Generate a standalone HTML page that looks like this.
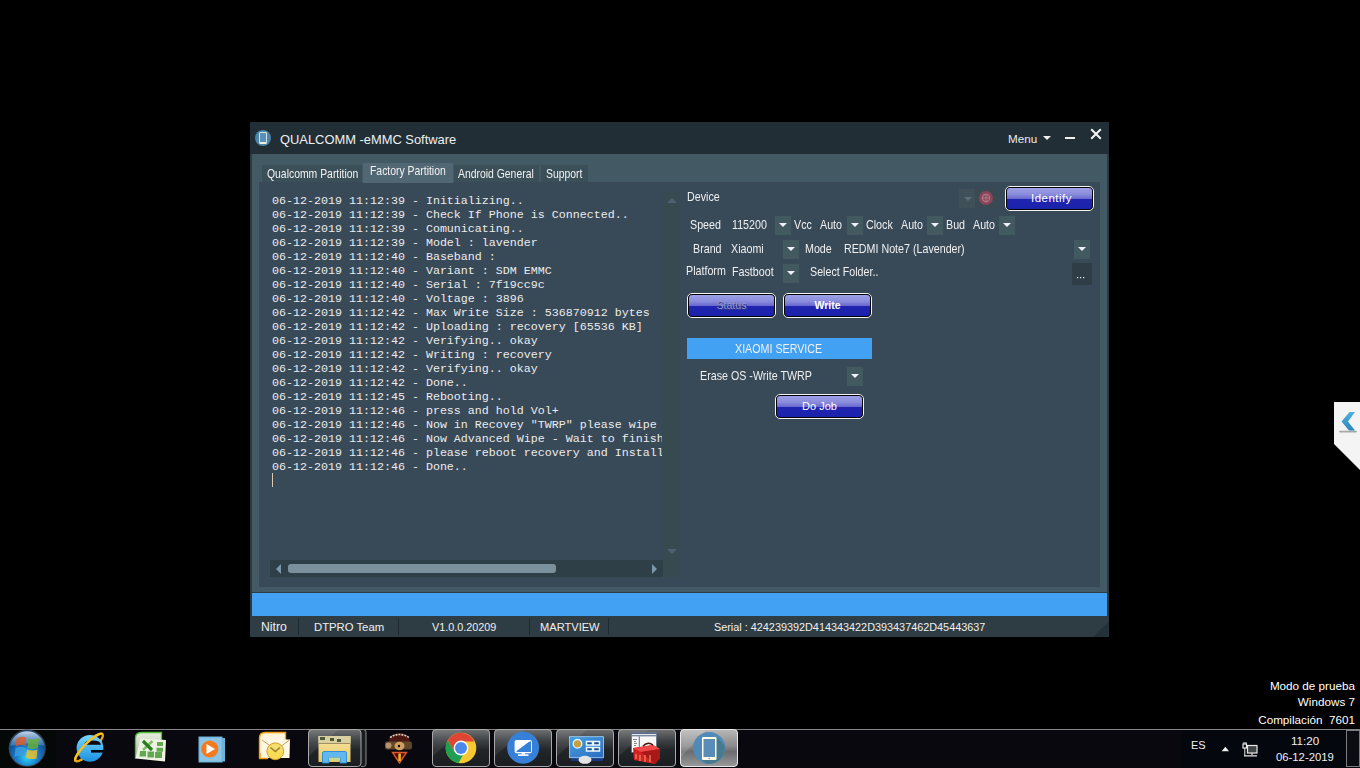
<!DOCTYPE html>
<html><head><meta charset="utf-8">
<style>
*{margin:0;padding:0;box-sizing:border-box}
html,body{width:1360px;height:768px;overflow:hidden;background:#000;font-family:"Liberation Sans",sans-serif;color:#f0f0f0}
.a{position:absolute}
.t{position:absolute;white-space:nowrap;line-height:1}
#win{left:250px;top:122px;width:859px;height:515px;background:#2b3a41}
#title{left:250px;top:122px;width:859px;height:32px;background:#212e36}
#content{left:252px;top:154px;width:855px;height:438px;background:#435a64}
.tab{position:absolute;top:165px;height:17px;background:#3b4f58;font-size:10.4px;color:#f2f2f2}
.tab span{position:absolute;left:0;top:1.6px;white-space:nowrap;font-size:12.1px;transform:scaleX(0.86);transform-origin:0 0}
#inner{left:259px;top:182px;width:841px;height:405px;background:#384958}
#log{left:272px;top:194px;width:390px;height:300px;overflow:hidden;font-family:"Liberation Mono",monospace;font-weight:normal;font-size:11.67px;line-height:14px;color:#ececec;white-space:pre}
.dd{position:absolute;width:16px;height:19px;background:#435960}
.dd:after{content:"";position:absolute;left:4px;top:7px;border-left:4px solid transparent;border-right:4px solid transparent;border-top:4px solid #f0f0fa}
.lbl{position:absolute;white-space:nowrap;line-height:1;font-size:12.4px;color:#f0f0f0;transform:scaleX(0.863);transform-origin:0 0;margin-top:-1.5px}
.btn{position:absolute;border:1px solid #f4f4f4;border-radius:5px;background:#000;padding:1px}
.btn i{display:block;width:100%;height:100%;border-radius:3px;background:linear-gradient(#9ca0e4 0%,#8a8cdc 30%,#6a6ad0 50%,#2024b0 54%,#1a22aa 100%)}
.btn b{position:absolute;left:0;right:0;text-align:center;font-size:11px;color:#fff;line-height:1;font-weight:normal}
#blue{left:252px;top:592px;width:855px;height:24px;background:#42a1f2;border-top:1px solid #2e3c44}
#status{left:250px;top:616px;width:859px;height:21px;background:#2e3d44}
.st{position:absolute;top:622px;font-size:11.5px;color:#f0f0f0;white-space:nowrap;line-height:1}
.sep{position:absolute;top:618px;width:1px;height:17px;background:#1f2a30}
#taskbar{left:0;top:729px;width:1360px;height:39px;background:#08080e;border-top:1px solid #6e6e72}
.tb{position:absolute;top:729px;width:58px;height:38px;border:1px solid #5a5e62;border-radius:3px;background:linear-gradient(#3a3d40,#1c1f22 50%,#15181b)}
.wm{position:absolute;font-size:11.7px;color:#fff;white-space:nowrap;line-height:1;right:5px}
</style></head><body>

<!-- window -->
<div class="a" id="win"></div>
<div class="a" id="title"></div>
<div class="a" id="content"></div>

<!-- tabs -->
<div class="tab" style="left:262px;width:100px"><span style="left:5px">Qualcomm Partition</span></div>
<div class="tab" style="left:363px;top:163px;height:20px;width:90px;background:#526774;z-index:2"><span style="left:7px;top:0.6px">Factory Partition</span></div>
<div class="tab" style="left:454px;width:85px"><span style="left:4px">Android General</span></div>
<div class="tab" style="left:541px;width:47px"><span style="left:5px">Support</span></div>

<div class="a" id="inner"></div>

<!-- log -->
<div class="a" id="log">06-12-2019 11:12:39 - Initializing..
06-12-2019 11:12:39 - Check If Phone is Connected..
06-12-2019 11:12:39 - Comunicating..
06-12-2019 11:12:39 - Model : lavender
06-12-2019 11:12:40 - Baseband :
06-12-2019 11:12:40 - Variant : SDM EMMC
06-12-2019 11:12:40 - Serial : 7f19cc9c
06-12-2019 11:12:40 - Voltage : 3896
06-12-2019 11:12:42 - Max Write Size : 536870912 bytes
06-12-2019 11:12:42 - Uploading : recovery [65536 KB]
06-12-2019 11:12:42 - Verifying.. okay
06-12-2019 11:12:42 - Writing : recovery
06-12-2019 11:12:42 - Verifying.. okay
06-12-2019 11:12:42 - Done..
06-12-2019 11:12:45 - Rebooting..
06-12-2019 11:12:46 - press and hold Vol+
06-12-2019 11:12:46 - Now in Recovey "TWRP" please wipe data
06-12-2019 11:12:46 - Now Advanced Wipe - Wait to finish
06-12-2019 11:12:46 - please reboot recovery and Install
06-12-2019 11:12:46 - Done..</div>
<div class="a" style="left:272px;top:473px;width:1px;height:14px;background:#e0c8b0"></div>

<!-- vertical scrollbar -->
<div class="a" style="left:663px;top:192px;width:17px;height:385px;background:#374a50"></div>
<div class="a" style="left:667px;top:198px;border-left:5px solid transparent;border-right:5px solid transparent;border-bottom:5px solid #4f6170"></div>
<div class="a" style="left:667px;top:549px;border-left:5px solid transparent;border-right:5px solid transparent;border-top:5px solid #4f6170"></div>
<!-- horizontal scrollbar -->
<div class="a" style="left:270px;top:560px;width:393px;height:17px;background:#2f3f47"></div>
<div class="a" style="left:276px;top:564px;border-top:5px solid transparent;border-bottom:5px solid transparent;border-right:5px solid #7a98a8"></div>
<div class="a" style="left:652px;top:564px;border-top:5px solid transparent;border-bottom:5px solid transparent;border-left:5px solid #7a98a8"></div>
<div class="a" style="left:288px;top:564px;width:268px;height:9px;border-radius:3px;background:#7b909d"></div>

<!-- right controls -->
<div class="lbl" style="left:687px;top:192px">Device</div>
<div class="a" style="left:959px;top:189px;width:16px;height:19px;background:#3f5058"></div>
<div class="a" style="left:964px;top:197px;border-left:4px solid transparent;border-right:4px solid transparent;border-top:4px solid #5d6e7a"></div>
<div class="a" style="left:975px;top:189px;width:22px;height:19px;background:#3a4a52"></div>
<svg class="a" style="left:978px;top:190px" width="16" height="16"><circle cx="8" cy="8" r="7" fill="#8a4658"/><circle cx="8" cy="8" r="3.6" fill="none" stroke="#b07888" stroke-width="1.2"/><path d="M8 4V12M4 8H12" stroke="#b07888" stroke-width="1"/></svg>

<div class="btn" style="left:1005px;top:186px;width:89px;height:25px"><i></i><b style="top:6px;left:4px;letter-spacing:0.5px;font-size:11.5px">Identify</b></div>

<div class="lbl" style="left:690px;top:220px">Speed</div>
<div class="lbl" style="left:732px;top:220px">115200</div>
<div class="dd" style="left:775px;top:216px"></div>
<div class="lbl" style="left:794px;top:220px">Vcc</div>
<div class="lbl" style="left:820px;top:220px">Auto</div>
<div class="dd" style="left:847px;top:216px"></div>
<div class="lbl" style="left:866px;top:220px">Clock</div>
<div class="lbl" style="left:901px;top:220px">Auto</div>
<div class="dd" style="left:927px;top:216px"></div>
<div class="lbl" style="left:946px;top:220px">Bud</div>
<div class="lbl" style="left:973px;top:220px">Auto</div>
<div class="dd" style="left:999px;top:216px"></div>

<div class="lbl" style="left:693px;top:244px">Brand</div>
<div class="lbl" style="left:731px;top:244px">Xiaomi</div>
<div class="dd" style="left:783px;top:240px"></div>
<div class="lbl" style="left:805px;top:244px">Mode</div>
<div class="lbl" style="left:844px;top:244px">REDMI Note7 (Lavender)</div>
<div class="dd" style="left:1074px;top:240px"></div>

<div class="lbl" style="left:686px;top:266px">Platform</div>
<div class="lbl" style="left:732px;top:267px">Fastboot</div>
<div class="dd" style="left:783px;top:264px"></div>
<div class="lbl" style="left:810px;top:267px">Select Folder..</div>
<div class="a" style="left:1072px;top:263px;width:20px;height:22px;background:#2f3e46"></div>
<svg class="a" style="left:1072px;top:263px" width="20" height="22"><rect x="5" y="14" width="1.2" height="1.2" fill="#f0f0f0"/><rect x="8" y="14" width="1.2" height="1.2" fill="#f0f0f0"/><rect x="11" y="14" width="1.2" height="1.2" fill="#f0f0f0"/></svg>

<div class="btn" style="left:687px;top:293px;width:89px;height:25px"><i></i><b style="top:6px;color:#9098c4;text-shadow:1px 1px 0 #303a88;font-size:10.5px">Status</b></div>
<div class="btn" style="left:783px;top:293px;width:89px;height:25px"><i></i><b style="top:6px;font-weight:bold;font-size:10.5px">Write</b></div>

<div class="a" style="left:687px;top:338px;width:185px;height:21px;background:#42a1f2"></div>
<div class="lbl" style="left:735px;top:344px">XIAOMI SERVICE</div>
<div class="lbl" style="left:700px;top:371px">Erase OS -Write TWRP</div>
<div class="dd" style="left:847px;top:367px"></div>
<div class="btn" style="left:775px;top:394px;width:89px;height:25px"><i></i><b style="top:6px">Do Job</b></div>

<!-- blue & status -->
<div class="a" id="blue"></div>
<div class="a" id="status"></div>
<div class="st" style="left:261px;font-size:12.2px;top:621px">Nitro</div>
<div class="sep" style="left:298px"></div>
<div class="st" style="left:314px;font-size:11.3px">DTPRO Team</div>
<div class="sep" style="left:398px"></div>
<div class="st" style="left:432px;font-size:10.8px">V1.0.0.20209</div>
<div class="sep" style="left:529px"></div>
<div class="st" style="left:540px;font-size:11.1px">MARTVIEW</div>
<div class="sep" style="left:608px"></div>
<svg class="a" style="left:1093px;top:621px" width="16" height="16"><path d="M0 16L16 0V16Z" fill="#233139"/></svg>
<div class="st" style="left:714px;font-size:10.85px">Serial : 424239392D414343422D393437462D45443637</div>

<!-- title bar content -->
<div class="a" style="left:255px;top:130px;width:16px;height:16px;border-radius:50%;background:#4a86a8"></div>
<div class="a" style="left:259px;top:132px;width:8px;height:12px;border:1px solid #d8e4e0;border-bottom:2px solid #f0f0e0;border-radius:1.5px;background:#5a90bc"></div>
<div class="t" style="left:280px;top:134px;font-size:12.9px;color:#f0f0f0">QUALCOMM -eMMC Software</div>
<div class="t" style="left:1008px;top:133px;font-size:11.7px;color:#e8e8e8">Menu</div>
<div class="a" style="left:1043px;top:136px;border-left:4px solid transparent;border-right:4px solid transparent;border-top:4px solid #f0f0f0"></div>
<div class="a" style="left:1065px;top:137px;width:10px;height:2px;background:#f0f0f0"></div>
<svg class="a" style="left:1090px;top:128px" width="12" height="12"><path d="M1.2 1.2L10.8 10.8M10.8 1.2L1.2 10.8" stroke="#f4f4f4" stroke-width="2"/></svg>

<!-- desktop side tab -->
<svg class="a" style="left:1334px;top:402px" width="26" height="68"><path d="M0 0H26V68L0 42Z" fill="#f4f4f4"/><defs><linearGradient id="chv" x1="0" y1="0" x2="0" y2="1"><stop offset="0" stop-color="#52b0e0"/><stop offset="1" stop-color="#2a86bc"/></linearGradient></defs><rect x="5" y="28.8" width="18" height="1.6" rx="0.8" fill="#a8a8a8"/><path d="M15.5 10H21L14 19.5L21 28.5H15L7.5 19.5Z" fill="url(#chv)"/></svg>

<!-- watermark -->
<div class="wm" style="top:680px">Modo de prueba</div>
<div class="wm" style="top:696px">Windows 7</div>
<div class="wm" style="top:714px">Compilación&nbsp; 7601</div>

<!-- taskbar -->
<div class="a" id="taskbar"></div>
<svg class="a" style="left:0;top:729px" width="1360" height="39" viewBox="0 729 1360 39">
<defs>
<linearGradient id="btnG" x1="0" y1="0" x2="0.75" y2="1"><stop offset="0" stop-color="#7a7c7e"/><stop offset="0.3" stop-color="#45484b"/><stop offset="0.48" stop-color="#2a2e31"/><stop offset="0.5" stop-color="#1e2225"/><stop offset="1" stop-color="#181c1f"/></linearGradient>
<linearGradient id="btnV" x1="0" y1="0" x2="0" y2="1"><stop offset="0" stop-color="#6e7072"/><stop offset="0.3" stop-color="#3e4144"/><stop offset="0.55" stop-color="#222629"/><stop offset="1" stop-color="#1a1e21"/></linearGradient>
<linearGradient id="btnA" x1="0" y1="0" x2="0" y2="1"><stop offset="0" stop-color="#b8b8b8"/><stop offset="0.45" stop-color="#8a8a8c"/><stop offset="0.6" stop-color="#6a6c70"/><stop offset="1" stop-color="#9a9a9a"/></linearGradient>
<radialGradient id="orbG" cx="0.5" cy="0.75" r="0.7"><stop offset="0" stop-color="#30d8ff"/><stop offset="0.45" stop-color="#1a78c8"/><stop offset="1" stop-color="#0c3a78"/></radialGradient>
<linearGradient id="orbH" x1="0" y1="0" x2="0" y2="1"><stop offset="0" stop-color="#e8f4ff" stop-opacity="0.85"/><stop offset="1" stop-color="#a0c8e8" stop-opacity="0.25"/></linearGradient>
<linearGradient id="ieG" x1="0" y1="0" x2="0" y2="1"><stop offset="0" stop-color="#7ad8ff"/><stop offset="1" stop-color="#1a90e0"/></linearGradient>
<linearGradient id="xlG" x1="0" y1="0" x2="0" y2="1"><stop offset="0" stop-color="#e8eee0"/><stop offset="1" stop-color="#a8b8a0"/></linearGradient>
<linearGradient id="folG" x1="0" y1="0" x2="0" y2="1"><stop offset="0" stop-color="#f8e8a8"/><stop offset="1" stop-color="#e8c860"/></linearGradient>
<filter id="fblur" x="-20%" y="-20%" width="140%" height="140%"><feGaussianBlur stdDeviation="0.6"/></filter>
</defs>
<rect x="0" y="729" width="56" height="39" fill="#040807"/>
<rect x="0" y="729" width="1360" height="1" fill="#84848a"/>
<!-- start orb -->
<circle cx="27.2" cy="748.2" r="18.6" fill="#3a4448"/>
<circle cx="27.2" cy="748.2" r="17.6" fill="url(#orbG)"/>
<path d="M10 746 A17.4 17.4 0 0 1 44.4 746 Q27 741 10 746Z" fill="url(#orbH)"/>
<g opacity="0.82" filter="url(#fblur)"><path d="M16.5 738.5 Q21 735.5 26.5 737.5 L25.5 746 Q21 744 15.5 746.5Z" fill="#e05a28"/>
<path d="M28.5 738.5 Q34 740.5 39 738 L38 748 Q33 750 27.5 748Z" fill="#68b030"/>
<path d="M15.5 748 Q21 745.5 25.5 748 L24.5 756.5 Q20 754.5 14.5 757Z" fill="#3a9ee0"/>
<path d="M27 749.5 Q32 751.5 37.5 749.5 L36.5 758.5 Q31 760 26 757.5Z" fill="#f0c020"/></g>
<!-- IE -->
<ellipse cx="89" cy="747.5" rx="19" ry="4.8" transform="rotate(-45 89 747.5)" fill="none" stroke="#e8a810" stroke-width="2.4"/>
<circle cx="90" cy="748.3" r="13.4" fill="url(#ieG)"/>
<path d="M84 744.8 Q84.5 740.5 92.5 740.5 Q100.5 740.5 101 744.8Z" fill="#06060d"/>
<path d="M91 750 H104 V752.6 H91Z" fill="#06060d"/>
<path d="M75.57 760.93 A19 4.8 -45 0 1 102.43 734.07" fill="none" stroke="#f6c020" stroke-width="2.4"/>
<!-- Excel -->
<path d="M135.5 758.5 V738 Q135.5 732.5 141.5 732.5 H161.5 V740" fill="url(#xlG)" stroke="#50c030" stroke-width="1.3"/>
<path d="M140.5 738.5 L166 740 L165 761.5 L135.5 758.5Z" fill="#eef2e2"/>
<path d="M140 751 h6 v5.5 h-6.5Z M147.5 751.5 h6.5 v6 h-6.5Z M155 752 h7 v6 h-7Z M156.5 747.8 h6.5 v4 h-6.5Z M157 742 h6 v4 h-6Z" fill="#62a850"/>
<path d="M152.5 741 L143 750" stroke="#80c068" stroke-width="2.6"/>
<path d="M143 741 L152 750" stroke="#2a7a20" stroke-width="3.2"/>
<!-- media player -->
<rect x="221" y="738" width="4" height="23.5" fill="#6ab4e0"/>
<rect x="199" y="737" width="23" height="25" fill="#8cc4e6" stroke="#6aaed8" stroke-width="1"/>
<circle cx="209.8" cy="749" r="8.6" fill="#f47a1e"/>
<path d="M206.5 744 L215 749 L206.5 754Z" fill="#fff"/>
<!-- Outlook -->
<path d="M259.5 758.5 V738 Q259.5 732.5 265.5 732.5 H285.5 V740" fill="#fff2d8" stroke="#f4a010" stroke-width="1.4"/>
<rect x="261" y="734" width="23.5" height="24" fill="#fff4dc"/>
<path d="M262 739.5 L290 739.5 L289.5 758 L262 758Z" fill="#fff8e4"/>
<path d="M262 740 L276 750 L289.5 740" fill="none" stroke="#c8a060" stroke-width="1"/>
<path d="M260 753 V758.5 H268" fill="none" stroke="#f4a010" stroke-width="1.4"/>
<circle cx="275.3" cy="751.3" r="8.4" fill="#f8dc58" stroke="#d0a028" stroke-width="1"/>
<path d="M267.4 751 A8 8 0 0 1 283.2 751Z" fill="#f0e090" opacity="0.6"/>
<path d="M270.5 747.5 L275.3 751.5 L280 747.5" fill="none" stroke="#a08018" stroke-width="1.6"/>
<!-- explorer button -->
<path d="M361 729.5 H363.5 Q366 729.5 366 732 V764 Q366 766.5 363.5 766.5 H361" fill="#1a1d20" stroke="#8c8c8c" stroke-width="1"/>
<rect x="308.5" y="729.5" width="52.5" height="37" rx="3.5" fill="url(#btnV)" stroke="#a8a8a8" stroke-width="1"/><path d="M309 730 H338 L309 756Z" fill="#ffffff" opacity="0.08"/>
<rect x="318.5" y="736" width="32" height="26" fill="url(#folG)"/>
<rect x="318.5" y="736" width="32" height="7.5" fill="#d8d0a0"/>
<path d="M320 737 h5 v3 h-5Z M330 738 h4 v3 h-4Z M337 739 h4 v3 h-4Z" fill="#50583a"/>
<rect x="318.5" y="743" width="32" height="1" fill="#a09060"/>
<path d="M322.5 763 V753 Q322.5 751.5 324 751.5 H345 Q346.5 751.5 346.5 753 V763 H340 V757.5 H329 V763Z" fill="#62b8ee" stroke="#2a8ad8" stroke-width="0.9"/>
<rect x="329" y="757.5" width="11" height="3" fill="#c8d890"/>
<!-- dragon icon -->
<ellipse cx="399.5" cy="741" rx="10.5" ry="8" fill="#4a1810"/>
<path d="M390 737.5 Q399.5 731.5 409 737.5" fill="none" stroke="#d8d0c0" stroke-width="1.6" stroke-dasharray="2 1"/>
<rect x="385" y="741.5" width="27" height="8" rx="2" fill="#6a5030" opacity="0.85"/>
<ellipse cx="388.5" cy="745.5" rx="3" ry="3" fill="#c8a878" opacity="0.8"/>
<ellipse cx="399.5" cy="746" rx="5" ry="4.2" fill="#d0a060"/>
<circle cx="399" cy="746" r="1.2" fill="#100804"/>
<path d="M392.5 752.5 H406.5 L399.5 763Z" fill="#4a0c0c" stroke="#e05828" stroke-width="1.4"/>
<rect x="398.3" y="753.5" width="2.6" height="7.5" fill="#f0b020"/>
<!-- chrome button -->
<rect x="432.5" y="729.5" width="57" height="37" rx="3.5" fill="url(#btnV)" stroke="#a8a8a8" stroke-width="1"/><path d="M433.0 730 H462.5 L433.0 756Z" fill="#ffffff" opacity="0.08"/>
<circle cx="461" cy="748" r="15.3" fill="#f8c830"/>
<path d="M461 732.7 A15.3 15.3 0 0 0 447.75 740.35 L454.5 752 L461 741.5 H474.25 A15.3 15.3 0 0 0 461 732.7Z" fill="#e04434"/>
<path d="M447.75 740.35 A15.3 15.3 0 0 0 458.5 763.1 L465 751.5 L454.5 752Z" fill="#1ea050"/>
<circle cx="461" cy="748" r="7.4" fill="#fff"/>
<circle cx="461" cy="748" r="6" fill="#4a88ec"/>
<!-- remote button -->
<rect x="494.5" y="729.5" width="57" height="37" rx="3.5" fill="url(#btnV)" stroke="#a8a8a8" stroke-width="1"/><path d="M495.0 730 H524.5 L495.0 756Z" fill="#ffffff" opacity="0.08"/>
<circle cx="523.1" cy="747.8" r="16" fill="#3680d8"/>
<rect x="515.5" y="740.8" width="15.5" height="11.5" rx="1" fill="#3680d8" stroke="#fff" stroke-width="1.8"/>
<path d="M516 752 L531 741 V752Z" fill="#3680d8"/>
<path d="M516 741 H530 L516 751.5Z" fill="#fff"/>
<rect x="521.5" y="752.5" width="3.5" height="2" fill="#fff"/>
<rect x="518" y="754.3" width="10.5" height="1.6" fill="#fff"/>
<!-- control panel button -->
<rect x="556.5" y="729.5" width="57" height="37" rx="3.5" fill="url(#btnV)" stroke="#a8a8a8" stroke-width="1"/><path d="M557.0 730 H586.5 L557.0 756Z" fill="#ffffff" opacity="0.08"/>
<linearGradient id="cpG" x1="0" y1="0" x2="1" y2="1"><stop offset="0" stop-color="#4aa0e0"/><stop offset="1" stop-color="#2a6cc0"/></linearGradient>
<rect x="571" y="757" width="32" height="4" fill="#1a3a80"/>
<rect x="569.5" y="736.7" width="34" height="21" fill="url(#cpG)" stroke="#a0d8f8" stroke-width="0.8"/>
<circle cx="577.5" cy="743.8" r="4.3" fill="#c8a040" stroke="#e0f4ff" stroke-width="1.3"/>
<rect x="586.5" y="741.5" width="6" height="3.5" fill="#1a5098" stroke="#e8f8ff" stroke-width="1.5"/>
<rect x="593.5" y="741.5" width="6" height="3.5" fill="#1a4a90" stroke="#e8f8ff" stroke-width="1.5"/>
<rect x="586.5" y="747.5" width="6" height="3.5" fill="#1a5098" stroke="#e8f8ff" stroke-width="1.5"/>
<rect x="593.5" y="747.5" width="6" height="3.5" fill="#1a4a90" stroke="#e8f8ff" stroke-width="1.5"/>
<ellipse cx="585" cy="759.8" rx="6.5" ry="4" fill="#e4e4e4"/>
<!-- toolbox button -->
<rect x="618.5" y="729.5" width="57" height="37" rx="3.5" fill="url(#btnV)" stroke="#a8a8a8" stroke-width="1"/><path d="M619.0 730 H648.5 L619.0 756Z" fill="#ffffff" opacity="0.08"/>
<rect x="631.5" y="732.5" width="25" height="20" fill="#f6f6f6" stroke="#50607a" stroke-width="0.6"/>
<rect x="631.5" y="732.5" width="25" height="1.6" fill="#5a6a88"/>
<rect x="631.5" y="735" width="25" height="1.4" fill="#7a8aa0"/>
<rect x="638.8" y="736.4" width="1" height="16" fill="#5a6a88"/>
<path d="M633 739.5 H637 M634 741.5 H636 M634 743.5 H637 M634 745.5 H636" stroke="#505050" stroke-width="0.7"/>
<path d="M633 748 L653 745 L660 749 L660 758 L655 764 L634 760Z" fill="#d42222"/><path d="M633 748 L653 745 L660 749 L641 752Z" fill="#f04848"/><path d="M641 752 L660 749 L660 758 L655 764Z" fill="#a81818"/><path d="M636 754 V759 M640 755 V761 M645 755 V762 M650 755 V762" stroke="#f0a070" stroke-width="1"/>
<path d="M643 746 Q648 741 653 745" fill="none" stroke="#4a1010" stroke-width="1.5"/>
<!-- phone button (active) -->
<rect x="680.5" y="729.5" width="57" height="37" rx="3.5" fill="url(#btnA)" stroke="#e8e8e8" stroke-width="1"/><path d="M681 730 H706 L681 757Z" fill="#ffffff" opacity="0.14"/>
<circle cx="709.1" cy="747.9" r="16" fill="#4f8ab8"/>
<path d="M716.5 737 L724.5 745.5 A16 16 0 0 1 706 763.6 L702 759.9Z" fill="#467a8c"/>
<rect x="702" y="737" width="14.5" height="23" rx="1.2" fill="#fffbe4"/>
<rect x="703.5" y="739" width="11.5" height="18" fill="#5a8cb8"/>
<circle cx="709.2" cy="758.5" r="0.7" fill="#5a8cb8"/>
<!-- tray -->
<rect x="1181" y="730" width="179" height="38" fill="#05070f"/>
<path d="M1221.7 751.3 L1225.35 746.8 L1229 751.3Z" fill="#f0f0f0"/>
<rect x="1243" y="744" width="3.5" height="4" fill="none" stroke="#e8e8e8" stroke-width="1.2"/>
<path d="M1244 742 V744 M1246 742 V744 M1244.8 748 V756" stroke="#e8e8e8" stroke-width="1"/>
<rect x="1247.5" y="745.5" width="9.5" height="7.5" fill="#40454a" stroke="#e8e8e8" stroke-width="1.2"/>
<path d="M1252 753 V755 M1244 755.8 H1257" stroke="#e8e8e8" stroke-width="1.2"/>
<rect x="1346.5" y="730.5" width="13" height="36" fill="#0b0d12" stroke="#7a7a80" stroke-width="1"/>
</svg>
<div class="t" style="left:1191px;top:740px;font-size:11px;color:#f0f0f0">ES</div>
<div class="t" style="left:1291px;top:735px;font-size:11.6px;color:#f0f0f0">11:20</div>
<div class="t" style="left:1276px;top:752px;font-size:11.3px;color:#f0f0f0">06-12-2019</div>
</body></html>
